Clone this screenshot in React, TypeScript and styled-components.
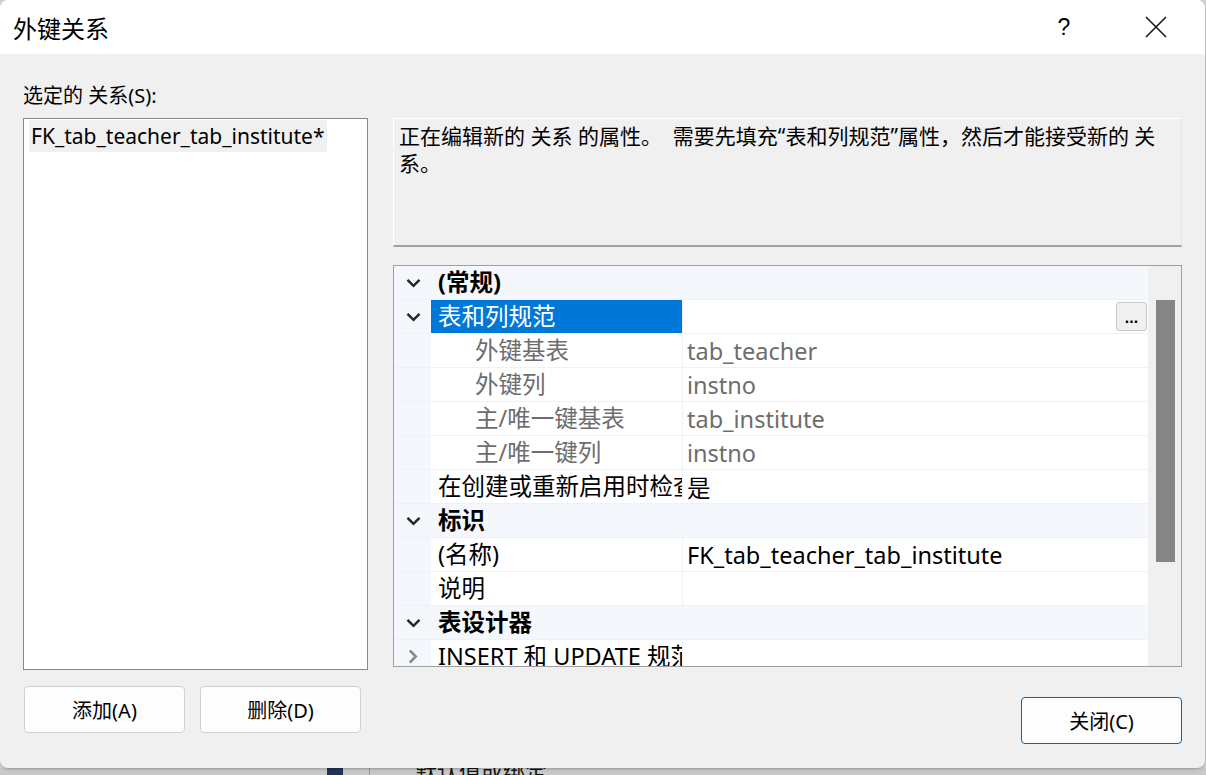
import React from "react"
import styled, { createGlobalStyle } from "styled-components"

const GlobalStyle = createGlobalStyle`
	html, body {
		margin: 0;
		padding: 0;
		background: #d2d2d2;
	}
	body {
		font-family: "Noto Sans", "Noto Sans CJK SC", sans-serif;
		color: #000;
	}
`

type Row = {
	kind: "category" | "prop"
	label: string
	value?: string
	indent?: boolean
	muted?: boolean
	selected?: boolean
	expander?: "down" | "right"
	button?: boolean
}

const rows: Row[] = [
	{ kind: "category", label: "(常规)", expander: "down" },
	{ kind: "prop", label: "表和列规范", value: "", selected: true, expander: "down", button: true },
	{ kind: "prop", label: "外键基表", value: "tab_teacher", indent: true, muted: true },
	{ kind: "prop", label: "外键列", value: "instno", indent: true, muted: true },
	{ kind: "prop", label: "主/唯一键基表", value: "tab_institute", indent: true, muted: true },
	{ kind: "prop", label: "主/唯一键列", value: "instno", indent: true, muted: true },
	{ kind: "prop", label: "在创建或重新启用时检查现有数据", value: "是" },
	{ kind: "category", label: "标识", expander: "down" },
	{ kind: "prop", label: "(名称)", value: "FK_tab_teacher_tab_institute" },
	{ kind: "prop", label: "说明", value: "" },
	{ kind: "category", label: "表设计器", expander: "down" },
	{ kind: "prop", label: "INSERT 和 UPDATE 规范", value: "", expander: "right" }
]

const Chevron = ({ dir }: { dir: "down" | "right" }) =>
	dir === "down" ? (
		<svg width="15" height="10" viewBox="0 0 15 10">
			<path d="M1.5 1.8 L7.5 7.8 L13.5 1.8" fill="none" stroke="#262626" strokeWidth="2.5" />
		</svg>
	) : (
		<svg width="10" height="15" viewBox="0 0 10 15">
			<path d="M1.8 1.5 L7.8 7.5 L1.8 13.5" fill="none" stroke="#8a8a8a" strokeWidth="2.5" />
		</svg>
	)

export default function App() {
	return (
		<Screen>
			<GlobalStyle />
			<Dialog>
				<TitleBar>
					<Title>外键关系</Title>
					<TitleButtons>
						<HelpGlyph>?</HelpGlyph>
						<CloseGlyph>
							<svg width="22" height="22" viewBox="0 0 22 22">
								<path d="M1 1 L21 21 M21 1 L1 21" stroke="#1a1a1a" strokeWidth="1.6" />
							</svg>
						</CloseGlyph>
					</TitleButtons>
				</TitleBar>
				<Body>
					<ListLabel>选定的 关系(S):</ListLabel>
					<LeftColumn>
						<ListBox>
							<ListItem>FK_tab_teacher_tab_institute*</ListItem>
						</ListBox>
						<ButtonRow>
							<DialogButton>添加(A)</DialogButton>
							<DialogButton>删除(D)</DialogButton>
						</ButtonRow>
					</LeftColumn>
					<RightColumn>
						<Description>
							<DescLine>正在编辑新的 关系 的属性。  需要先填充“表和列规范”属性，然后才能接受新的 关</DescLine>
							<DescLine>系。</DescLine>
						</Description>
						<PropertyGrid>
							<GridRows>
								{rows.map((row, i) =>
									row.kind === "category" ? (
										<CategoryRow key={i}>
											<Gutter>{row.expander && <Chevron dir={row.expander} />}</Gutter>
											<CategoryLabel>{row.label}</CategoryLabel>
										</CategoryRow>
									) : (
										<PropRow key={i}>
											<Gutter>{row.expander && <Chevron dir={row.expander} />}</Gutter>
											<NameCell $selected={row.selected} $indent={row.indent} $muted={row.muted}>
												{row.label}
											</NameCell>
											<ValueCell $muted={row.muted}>
												<span>{row.value}</span>
												{row.button && <EllipsisButton>...</EllipsisButton>}
											</ValueCell>
										</PropRow>
									)
								)}
							</GridRows>
							<ScrollTrack>
								<ScrollThumb />
							</ScrollTrack>
						</PropertyGrid>
						<Footer>
							<DialogButton $primary>关闭(C)</DialogButton>
						</Footer>
					</RightColumn>
				</Body>
			</Dialog>
			<Backdrop>
				<BackdropIcon />
				<BackdropDivider />
				<BackdropText>默认值或绑定</BackdropText>
			</Backdrop>
		</Screen>
	)
}

const Screen = styled.div`
	width: 1206px;
	height: 775px;
	overflow: hidden;
	background: #d2d2d2;
`
const Dialog = styled.div`
	width: 1205px;
	height: 768px;
	border-radius: 8px;
	overflow: hidden;
	background: #f0f0f0;
	display: flex;
	flex-direction: column;
	box-shadow: 0 1px 3px rgba(0, 0, 0, 0.25);
	position: relative;
	z-index: 1;
`
const TitleBar = styled.div`
	height: 54px;
	background: #fff;
	display: flex;
	align-items: center;
	justify-content: space-between;
	padding-left: 13px;
	flex-shrink: 0;
`
const Title = styled.div`
	font-size: 24px;
`
const TitleButtons = styled.div`
	display: flex;
	align-items: center;
	height: 100%;
`
const HelpGlyph = styled.div`
	width: 92px;
	text-align: center;
	font-size: 23px;
	font-family: "Liberation Sans", sans-serif;
	padding-left: 6px;
`
const CloseGlyph = styled.div`
	width: 92px;
	height: 100%;
	display: flex;
	align-items: center;
	justify-content: center;
	margin-right: 3px;
`
const Body = styled.div`
	flex: 1;
	display: grid;
	grid-template-columns: 345px 789px;
	grid-template-rows: 34px 1fr;
	column-gap: 25px;
	padding: 30px 23px 25px 23px;
`
const ListLabel = styled.div`
	grid-column: 1;
	grid-row: 1;
	font-size: 20px;
	line-height: 24px;
`
const LeftColumn = styled.div`
	grid-column: 1;
	grid-row: 2;
	display: flex;
	flex-direction: column;
	gap: 16px;
`
const ListBox = styled.div`
	height: 552px;
	box-sizing: border-box;
	border: 1px solid #828790;
	background: #fff;
	padding: 1px 5px;
`
const ListItem = styled.div`
	display: inline-block;
	background: #f0f0f0;
	font-size: 21px;
	line-height: 32px;
	padding: 0 2px;
`
const ButtonRow = styled.div`
	display: flex;
	gap: 15px;
	padding-left: 1px;
`
const DialogButton = styled.button<{ $primary?: boolean }>`
	width: 161px;
	height: 47px;
	box-sizing: border-box;
	background: #fdfdfd;
	border: 1px solid ${(p) => (p.$primary ? "#0067c0" : "#d0d0d0")};
	border-radius: 4px;
	font-family: "Noto Sans", "Noto Sans CJK SC", sans-serif;
	font-size: 20px;
	color: #000;
	padding: 0;
`
const RightColumn = styled.div`
	grid-column: 2;
	grid-row: 2;
	display: flex;
	flex-direction: column;
`
const Description = styled.div`
	height: 129px;
	box-sizing: border-box;
	border: 1px solid #e6e6e6;
	border-top-color: #fff;
	border-left-color: #fff;
	border-bottom: 2px solid #a0a0a0;
	padding: 4px 5px;
	font-size: 21px;
	line-height: 27px;
`
const DescLine = styled.div`
	white-space: pre;
`
const PropertyGrid = styled.div`
	margin-top: 18px;
	height: 402px;
	box-sizing: border-box;
	border: 1px solid #a0a0a0;
	display: flex;
	background: #fff;
`
const GridRows = styled.div`
	width: 754px;
	overflow: hidden;
	font-size: 23.5px;
`
const RowBase = styled.div`
	height: 34px;
	box-sizing: border-box;
	display: flex;
	border-bottom: 1px solid #eef1f7;
`
const CategoryRow = styled(RowBase)`
	background: #f4f7fc;
`
const PropRow = styled(RowBase)`
	background: #fff;
`
const Gutter = styled.div`
	width: 37px;
	flex-shrink: 0;
	background: #f4f7fc;
	display: flex;
	align-items: center;
	justify-content: center;
	padding-left: 1px;
	box-sizing: border-box;
`
const CategoryLabel = styled.div`
	font-weight: 700;
	padding-left: 7px;
	line-height: 33px;
`
const NameCell = styled.div<{ $selected?: boolean; $indent?: boolean; $muted?: boolean }>`
	width: 252px;
	flex-shrink: 0;
	overflow: hidden;
	white-space: nowrap;
	line-height: 33px;
	padding-left: ${(p) => (p.$indent ? "44px" : "7px")};
	box-sizing: border-box;
	background: ${(p) => (p.$selected ? "#0078d7" : "#fff")};
	color: ${(p) => (p.$selected ? "#fff" : p.$muted ? "#6d6d6d" : "#000")};
	border-right: 1px solid #eef1f7;
`
const ValueCell = styled.div<{ $muted?: boolean }>`
	flex: 1;
	display: flex;
	align-items: center;
	justify-content: space-between;
	padding-left: 4px;
	padding-right: 1px;
	white-space: nowrap;
	color: ${(p) => (p.$muted ? "#6d6d6d" : "#000")};
`
const EllipsisButton = styled.div`
	width: 31px;
	height: 29px;
	box-sizing: border-box;
	background: #f0f0f0;
	border: 1px solid #c8c8c8;
	border-radius: 3px;
	font-family: "Liberation Sans", sans-serif;
	font-size: 16px;
	font-weight: 700;
	line-height: 30px;
	text-align: center;
	color: #000;
`
const ScrollTrack = styled.div`
	flex: 1;
	background: #f0f0f0;
	padding: 34px 6px 0 8px;
`
const ScrollThumb = styled.div`
	height: 262px;
	background: #858585;
`
const Footer = styled.div`
	margin-top: 30px;
	display: flex;
	justify-content: flex-end;
`
const Backdrop = styled.div`
	height: 7px;
	display: flex;
	align-items: flex-start;
	background: #c8c8c8;
	overflow: visible;
`
const BackdropIcon = styled.div`
	margin-left: 327px;
	width: 16px;
	height: 7px;
	background: #223354;
`
const BackdropDivider = styled.div`
	margin-left: 26px;
	width: 1px;
	height: 7px;
	background: #9a9a9a;
`
const BackdropText = styled.div`
	margin-left: 45px;
	font-size: 22px;
	line-height: 4px;
	color: #111;
	font-family: "Noto Sans CJK SC", sans-serif;
`
